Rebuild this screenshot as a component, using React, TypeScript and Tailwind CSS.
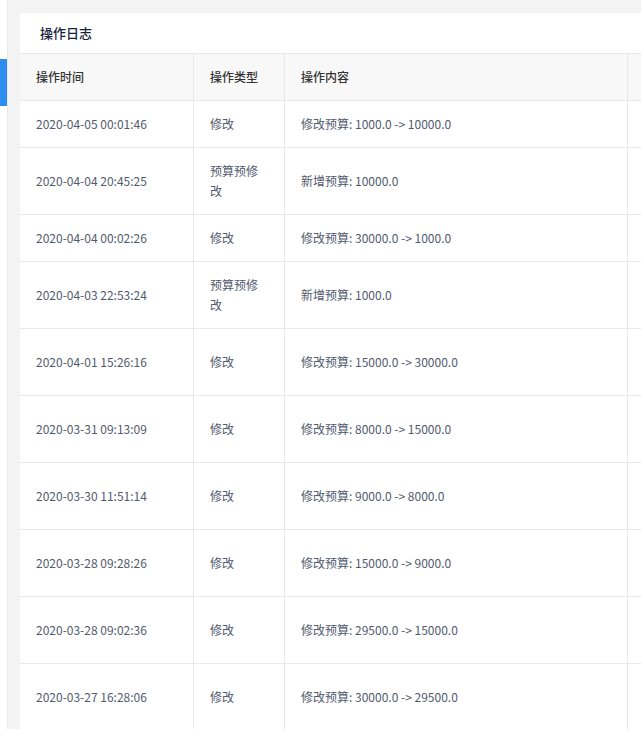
const rows: [string, string, string, number][] = [
  ["2020-04-05 00:01:46", "修改", "修改预算: 1000.0 -> 10000.0", 47],
  ["2020-04-04 20:45:25", "预算预修改", "新增预算: 10000.0", 67],
  ["2020-04-04 00:02:26", "修改", "修改预算: 30000.0 -> 1000.0", 47],
  ["2020-04-03 22:53:24", "预算预修改", "新增预算: 1000.0", 67],
  ["2020-04-01 15:26:16", "修改", "修改预算: 15000.0 -> 30000.0", 67],
  ["2020-03-31 09:13:09", "修改", "修改预算: 8000.0 -> 15000.0", 67],
  ["2020-03-30 11:51:14", "修改", "修改预算: 9000.0 -> 8000.0", 67],
  ["2020-03-28 09:28:26", "修改", "修改预算: 15000.0 -> 9000.0", 67],
  ["2020-03-28 09:02:36", "修改", "修改预算: 29500.0 -> 15000.0", 67],
  ["2020-03-27 16:28:06", "修改", "修改预算: 30000.0 -> 29500.0", 67],
];

export default function App() {
  return (
    <div className="flex h-[729px] w-[641px] overflow-hidden bg-[#f3f3f3] text-[12px] text-[#515a6e]" style={{ fontFamily: '"Noto Sans CJK SC", "Noto Sans", sans-serif' }}>
      <div className="w-[8px] shrink-0 border-r border-[#e8e8e8] bg-white pt-[59px]">
        <div className="h-[47px] w-[7px] bg-[#2d8cf0]" />
      </div>
      <div className="flex-1 pl-[12px] pt-[13px]">
        <div className="w-[640px] rounded-tl-[4px] bg-white">
          <div className="flex h-[41px] items-center border-b border-[#e8e8e8] pl-[20px] text-[13px] font-medium text-[#17233d]">操作日志</div>
          <div className="flex h-[47px] items-center border-b border-[#e8e8e8] bg-[#f8f8f9] font-medium text-[#333]">
            <div className="flex h-full w-[174px] items-center border-r border-[#e8e8e8] pl-[16px]">操作时间</div>
            <div className="flex h-full w-[91px] items-center border-r border-[#e8e8e8] pl-[16px]">操作类型</div>
            <div className="flex h-full w-[343px] items-center border-r border-[#e8e8e8] pl-[16px]">操作内容</div>
            <div className="flex-1" />
          </div>
          {rows.map(([t, ty, c, h], i) => (
            <div key={i} className="flex items-stretch border-b border-[#e8e8e8]" style={{ height: h }}>
              <div className="flex w-[174px] items-center border-r border-[#e8e8e8] pl-[16px]">{t}</div>
              <div className="flex w-[91px] items-center border-r border-[#e8e8e8] px-[16px] leading-[20px]">{ty}</div>
              <div className="flex w-[343px] items-center border-r border-[#e8e8e8] pl-[16px]">{c}</div>
              <div className="flex-1" />
            </div>
          ))}
        </div>
      </div>
    </div>
  );
}
